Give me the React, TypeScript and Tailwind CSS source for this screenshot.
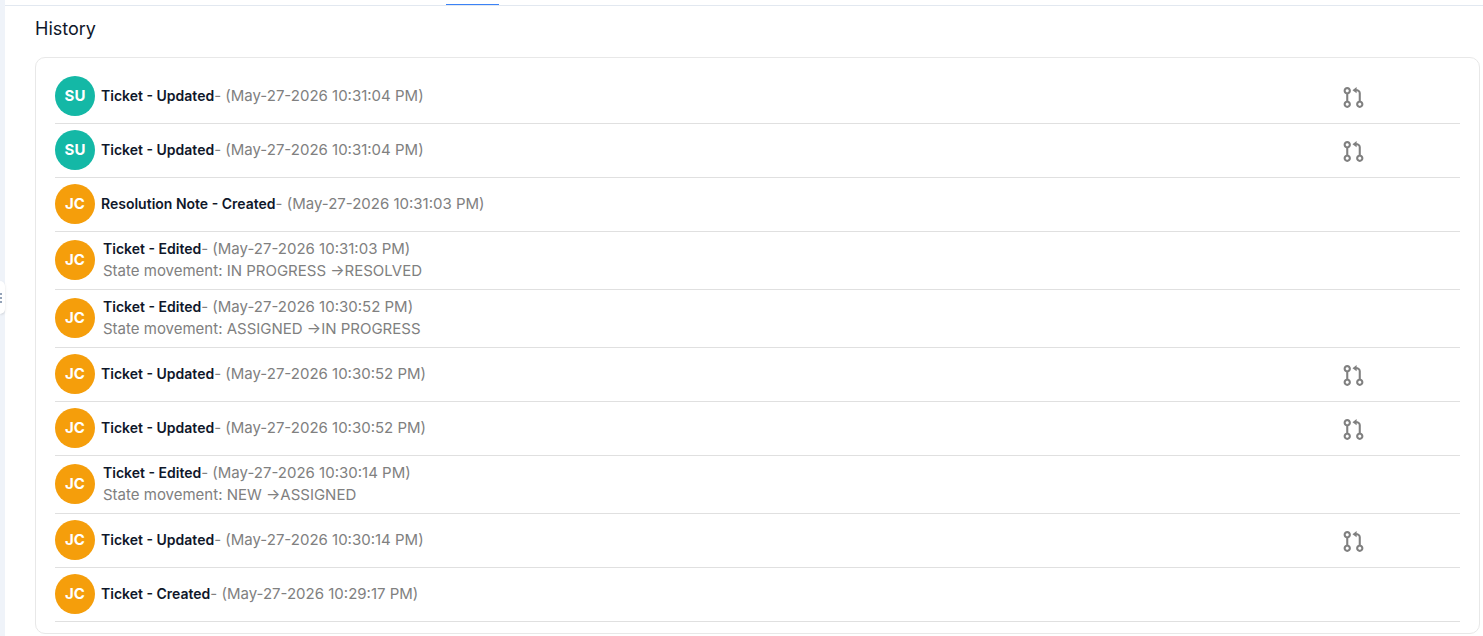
import { BiGitPullRequest } from "react-icons/bi";

type HistoryItem = {
  initials: string;
  title: string;
  date: string;
  movement?: string;
  hasDiff?: boolean;
};

const historyData: HistoryItem[] = [
  { initials: "SU", title: "Ticket - Updated", date: "May-27-2026 10:31:04 PM", hasDiff: true },
  { initials: "SU", title: "Ticket - Updated", date: "May-27-2026 10:31:04 PM", hasDiff: true },
  { initials: "JC", title: "Resolution Note - Created", date: "May-27-2026 10:31:03 PM" },
  { initials: "JC", title: "Ticket - Edited", date: "May-27-2026 10:31:03 PM", movement: "IN PROGRESS →RESOLVED" },
  { initials: "JC", title: "Ticket - Edited", date: "May-27-2026 10:30:52 PM", movement: "ASSIGNED →IN PROGRESS" },
  { initials: "JC", title: "Ticket - Updated", date: "May-27-2026 10:30:52 PM", hasDiff: true },
  { initials: "JC", title: "Ticket - Updated", date: "May-27-2026 10:30:52 PM", hasDiff: true },
  { initials: "JC", title: "Ticket - Edited", date: "May-27-2026 10:30:14 PM", movement: "NEW →ASSIGNED" },
  { initials: "JC", title: "Ticket - Updated", date: "May-27-2026 10:30:14 PM", hasDiff: true },
  { initials: "JC", title: "Ticket - Created", date: "May-27-2026 10:29:17 PM" },
];

const avatarColors: Record<string, string> = {
  SU: "bg-[#14b8a6]",
  JC: "bg-[#f59e0b]",
};

const HistoryRow = ({ item }: { item: HistoryItem }) => {
  return (
    <li className={`flex items-center pb-px border-b border-[#e0e0e0] ${item.movement ? "h-[58px]" : "h-[54px]"}`}>
      <div
        className={`flex items-center justify-center shrink-0 w-10 h-10 rounded-full text-white text-[15px] leading-5 font-bold ${avatarColors[item.initials]}`}
      >
        {item.initials}
      </div>
      <div className={`flex-1 text-[15px] leading-[22px] text-[#808080] ${item.movement ? "ml-2" : "ml-1.5"}`}>
        <p>
          <span className="text-sm leading-5 font-semibold text-[#0f172a]">{item.title}</span>- ({item.date})
        </p>
        {item.movement && <p>State movement: {item.movement}</p>}
      </div>
      {item.hasDiff && (
        <button className="mt-0.5 mr-[94px] text-[#808080]" aria-label="View changes">
          <BiGitPullRequest size={25} />
        </button>
      )}
    </li>
  );
};

const App = () => {
  return (
    <div className="flex min-h-screen bg-white font-['Inter',sans-serif]">
      {/* sidebar edge with the resize handle */}
      <aside className="relative w-[5px] shrink-0 bg-[#eff3f9]">
        <button
          className="absolute left-0 top-[281px] flex flex-col items-start justify-center gap-0.5 w-[5px] h-[33px] rounded-r-md bg-white shadow-sm"
          aria-label="Resize sidebar"
        >
          <span className="w-0.5 h-0.5 bg-[#94a3b8]" />
          <span className="w-0.5 h-0.5 bg-[#94a3b8]" />
          <span className="w-0.5 h-0.5 bg-[#94a3b8]" />
        </button>
      </aside>

      <main className="flex-1">
        {/* bottom of the tab bar */}
        <div className="h-1.5 pt-1 border-b border-[#e2e8f0]">
          <div className="ml-[441px] w-[53px] h-px bg-[#3b82f6]" />
        </div>

        <section className="pl-[30px] pr-[3px]">
          <h2 className="pt-2.5 pb-[15px] text-lg leading-[26px] text-[#0f172a]">History</h2>
          <ul className="px-[19px] pt-3 pb-[11px] border border-[#e8e8e8] rounded-[10px]">
            {historyData.map((item, index) => (
              <HistoryRow item={item} key={index} />
            ))}
          </ul>
        </section>
      </main>
    </div>
  );
};

export default App;
